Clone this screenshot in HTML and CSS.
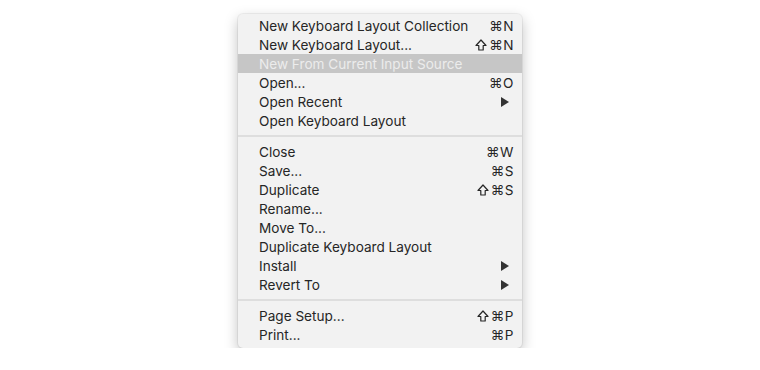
FILE: index.html
```html
<!DOCTYPE html>
<html lang="en">

<head>
    <meta charset="UTF-8">
    <meta name="viewport" content="width=device-width, initial-scale=1.0">
    <title>File Menu</title>
    <link rel="stylesheet" href="styles.css">
</head>

<body>
    <div class="page">
        <ul class="menu">
            <li class="item"><span>New Keyboard Layout Collection</span><span class="key">⌘N</span></li>
            <li class="item"><span>New Keyboard Layout...</span><span class="key"><svg class="shift" viewBox="0 0 12 12"><path d="M6 1 L11 6.5 L8.2 6.5 L8.2 11 L3.8 11 L3.8 6.5 L1 6.5 Z"/></svg>⌘N</span></li>
            <li class="item disabled"><span>New From Current Input Source</span></li>
            <li class="item"><span>Open...</span><span class="key">⌘O</span></li>
            <li class="item"><span>Open Recent</span><svg class="arrow" viewBox="0 0 8 10"><path d="M0 0 L8 5 L0 10 Z"/></svg></li>
            <li class="item"><span>Open Keyboard Layout</span></li>
            <li class="sep"></li>
            <li class="item"><span>Close</span><span class="key">⌘W</span></li>
            <li class="item"><span>Save...</span><span class="key">⌘S</span></li>
            <li class="item"><span>Duplicate</span><span class="key"><svg class="shift" viewBox="0 0 12 12"><path d="M6 1 L11 6.5 L8.2 6.5 L8.2 11 L3.8 11 L3.8 6.5 L1 6.5 Z"/></svg>⌘S</span></li>
            <li class="item"><span>Rename...</span></li>
            <li class="item"><span>Move To...</span></li>
            <li class="item"><span>Duplicate Keyboard Layout</span></li>
            <li class="item"><span>Install</span><svg class="arrow" viewBox="0 0 8 10"><path d="M0 0 L8 5 L0 10 Z"/></svg></li>
            <li class="item"><span>Revert To</span><svg class="arrow" viewBox="0 0 8 10"><path d="M0 0 L8 5 L0 10 Z"/></svg></li>
            <li class="sep"></li>
            <li class="item"><span>Page Setup...</span><span class="key"><svg class="shift" viewBox="0 0 12 12"><path d="M6 1 L11 6.5 L8.2 6.5 L8.2 11 L3.8 11 L3.8 6.5 L1 6.5 Z"/></svg>⌘P</span></li>
            <li class="item"><span>Print...</span><span class="key">⌘P</span></li>
        </ul>
    </div>
</body>

</html>
```

FILE: styles.css
```css
* {
    margin: 0;
    padding: 0;
    box-sizing: border-box;
}

body {
    background: #ffffff;
    font-family: "Inter", "DejaVu Sans", sans-serif;
    font-size: 13.6px;
    color: #262626;
}

.page {
    padding-top: 14px;
    padding-left: 238px;
}

.menu {
    list-style: none;
    width: 284px;
    padding: 2px 0 4px;
    background: #f2f2f2;
    border-radius: 5px;
    box-shadow: 0 0 0 1px rgba(0, 0, 0, 0.05), 0 5px 14px rgba(0, 0, 0, 0.25);
}

.item {
    display: flex;
    justify-content: space-between;
    align-items: center;
    height: 19px;
    padding: 0 8px 0 21px;
}

.disabled {
    background: #c6c6c6;
    color: #ececec;
}

.key {
    display: flex;
    align-items: center;
    gap: 2px;
    font-family: "Inter", "Noto Sans", "DejaVu Sans", sans-serif;
    letter-spacing: 0.5px;
}

.shift {
    width: 12px;
    height: 12px;
    fill: none;
    stroke: #262626;
    stroke-width: 1.2;
    stroke-linejoin: round;
}

.arrow {
    width: 8px;
    height: 10px;
    margin-right: 5px;
    fill: #333333;
}

.sep {
    height: 12px;
    display: flex;
    align-items: center;
}

.sep::before {
    content: "";
    flex: 1;
    height: 2px;
    background: #dedede;
}
```
